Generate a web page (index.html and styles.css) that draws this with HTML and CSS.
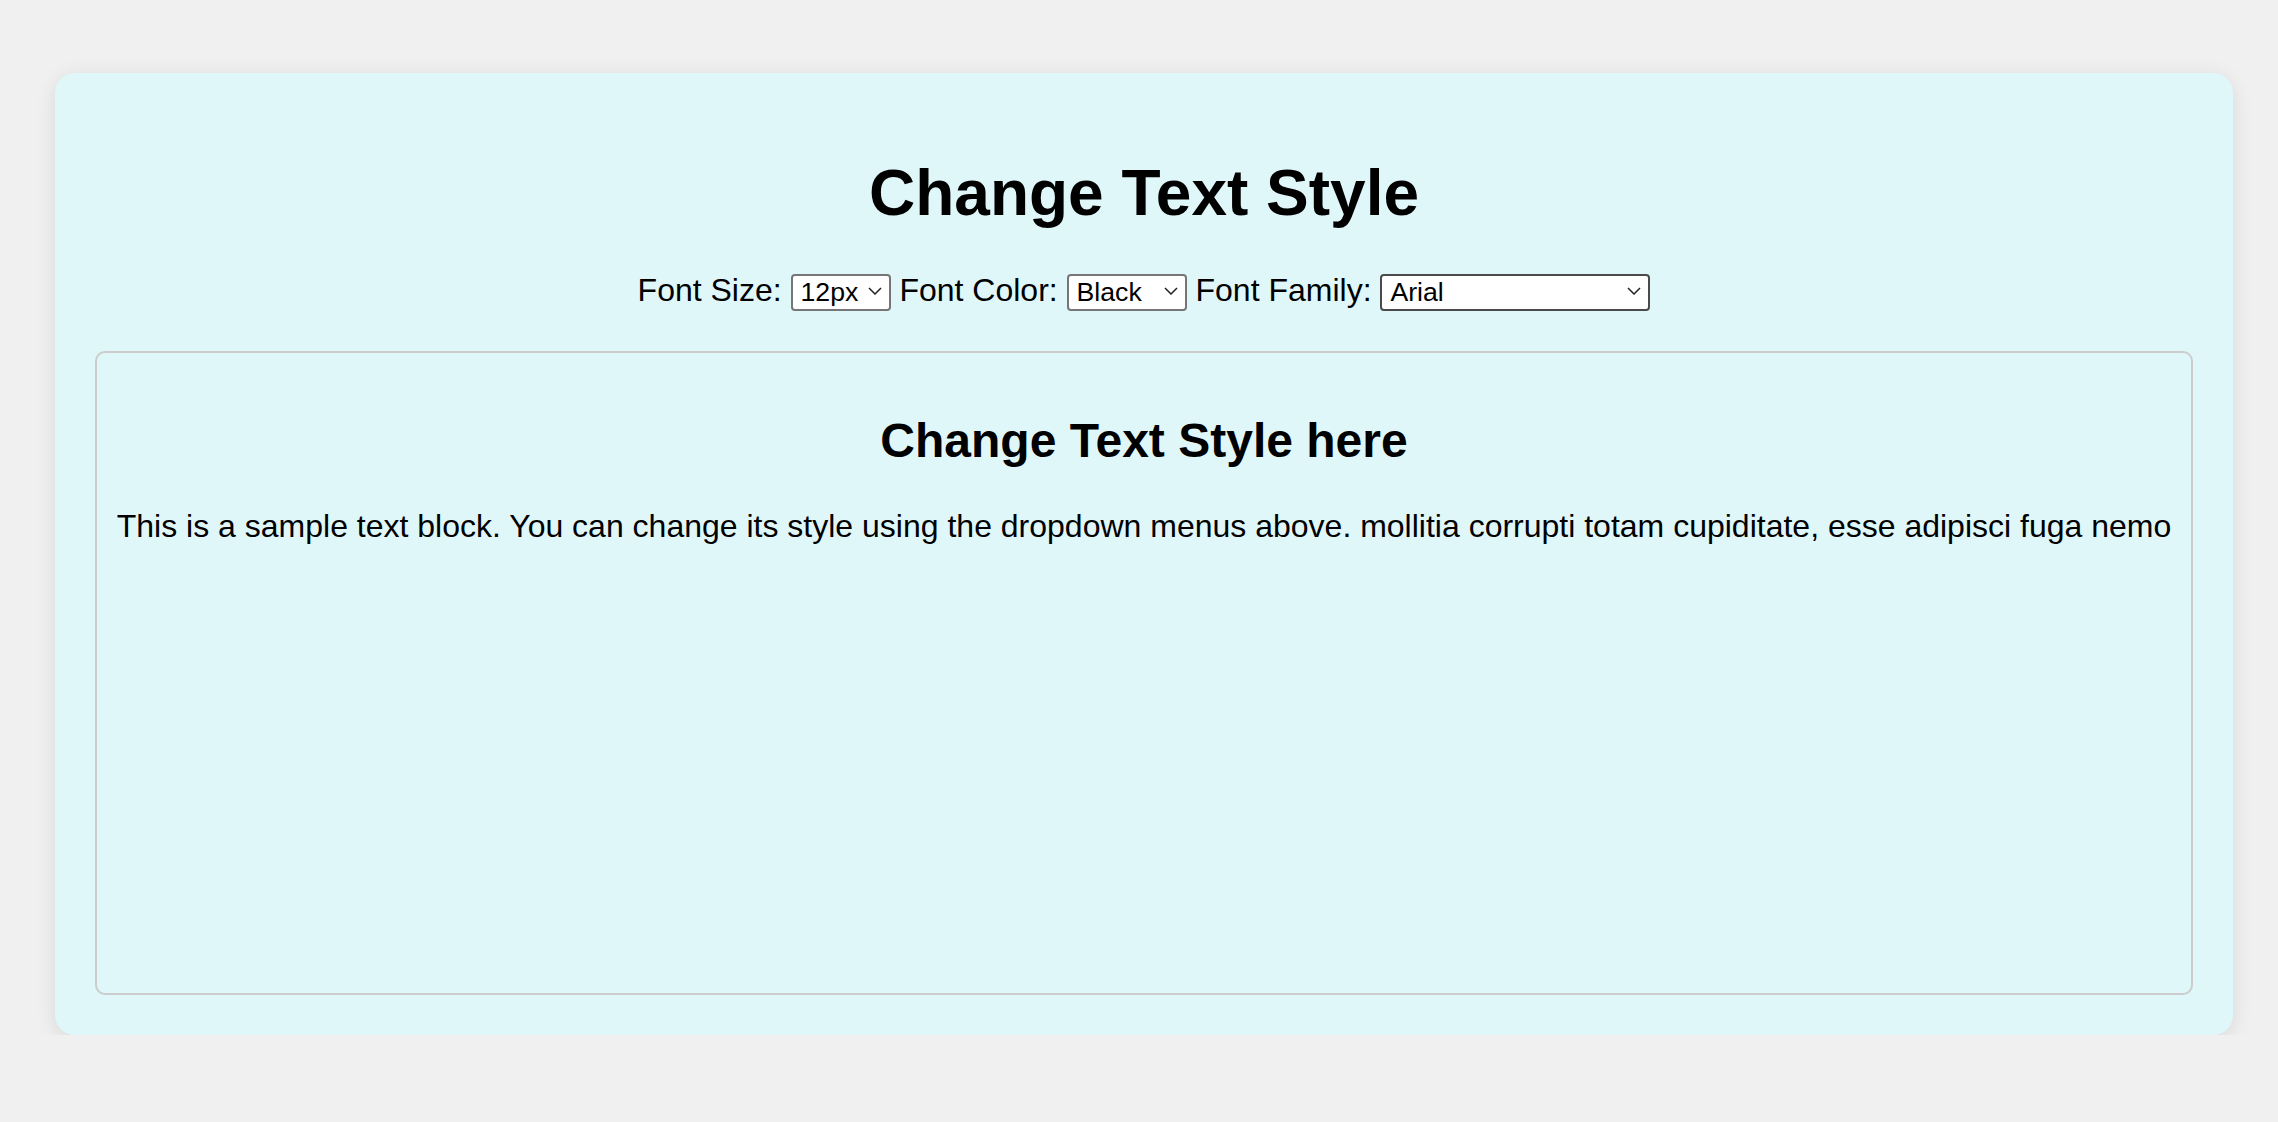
FILE: index.html
```html
<!DOCTYPE html>
<html lang="en">
<head>
<meta charset="utf-8">
<title>Change Text Style</title>
<link rel="stylesheet" href="styles.css">
</head>
<body>
<div class="card">
  <h1 class="title">Change Text Style</h1>
  <div class="controls">
    <label for="fs">Font Size:</label>
    <span class="sel sel-size"><select id="fs"><option>12px</option><option>14px</option><option>16px</option><option>18px</option><option>20px</option><option>24px</option></select><svg class="chev" viewBox="0 0 14 8" width="14" height="8"><path d="M1 1l6 6 6-6"/></svg></span>
    <label for="fc">Font Color:</label>
    <span class="sel sel-color"><select id="fc"><option>Black</option><option>Red</option><option>Blue</option><option>Green</option></select><svg class="chev" viewBox="0 0 14 8" width="14" height="8"><path d="M1 1l6 6 6-6"/></svg></span>
    <label for="ff">Font Family:</label>
    <span class="sel sel-family"><select id="ff" class="dark"><option>Arial</option><option>Times New Roman</option><option>Courier New</option><option>Verdana</option><option>Georgia</option></select><svg class="chev" viewBox="0 0 14 8" width="14" height="8"><path d="M1 1l6 6 6-6"/></svg></span>
  </div>
  <div class="preview">
    <h2 class="preview-title">Change Text Style here</h2>
    <p class="preview-text">This is a sample text block. You can change its style using the dropdown menus above. mollitia corrupti totam cupiditate, esse adipisci fuga nemo</p>
  </div>
</div>
</body>
</html>
```

FILE: styles.css
```css
html, body {
  margin: 0;
  padding: 0;
}

body {
  background: #f0f0f0;
  font-family: "Liberation Sans", Arial, sans-serif;
  color: #000;
  padding: 73px 45px 0 55px;
}

.card {
  background: #e0f7fa;
  border-radius: 20px;
  padding: 40px;
  box-shadow: 0 4px 20px rgba(0, 0, 0, 0.1);
}

.title {
  font-size: 64px;
  font-weight: bold;
  text-align: center;
  margin: 43px 0 42.3px;
}

.controls {
  font-size: 32px;
  text-align: center;
  margin-bottom: 40px;
}

.sel {
  position: relative;
  display: inline-block;
}

.sel select {
  -webkit-appearance: none;
  appearance: none;
  box-sizing: border-box;
  height: 37px;
  font-family: "Liberation Sans", Arial, sans-serif;
  font-size: 26.67px;
  color: #000;
  background: #fff;
  border: 2px solid #767676;
  border-radius: 4px;
  padding: 0 0 0 8px;
  margin: 0;
}

.sel select.dark {
  border-color: #4a4a4a;
}

.sel-size select { width: 100px; }
.sel-color select { width: 120px; }
.sel-family select { width: 270px; }

.chev {
  position: absolute;
  right: 9px;
  top: 15px;
  pointer-events: none;
}

.chev path {
  fill: none;
  stroke: #222;
  stroke-width: 1.5;
}

.preview {
  border: 2px solid #ccc;
  border-radius: 10px;
  padding: 20px 16px;
  height: 600px;
  text-align: center;
}

.preview-title {
  font-size: 48px;
  font-weight: bold;
  margin: 40px 0;
}

.preview-text {
  font-size: 32px;
  margin: 32px 0;
}
```
